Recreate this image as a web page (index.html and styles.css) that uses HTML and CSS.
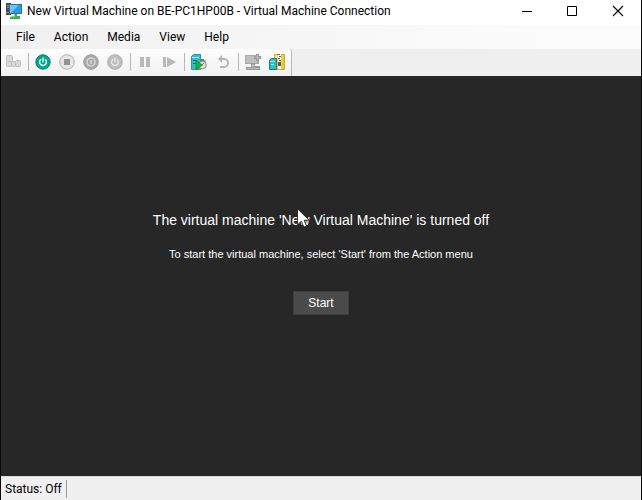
FILE: index.html
```html
<!DOCTYPE html>
<html lang="en">
<head>
<meta charset="utf-8">
<title>New Virtual Machine on BE-PC1HP00B - Virtual Machine Connection</title>
<link rel="stylesheet" href="styles.css">
</head>
<body>
<div class="window">
  <header class="titlebar">
    <svg class="app-icon" width="16" height="16" viewBox="0 0 16 16">
      <path fill="#454b50" d="M0 0h5v12H0z"/><path fill="#8d969b" d="M1 2h2v1H1zM1 4h2v1H1z"/><path fill="#47c34b" d="M0 9h3v1H0z"/>
      <path fill="#3a6a8a" d="M3 1h13v10H3z"/><path fill="#239be8" d="M4 2h11v8H4z"/><path fill="#69c3fa" d="M4 2h9l-8 8H4z"/>
      <path fill="#35b34a" d="M8 11h3v2h3v3H4v-2l4-1z"/><path fill="#7ddb7c" d="M8 11h1v3H6v-1h2z"/>
    </svg>
    <h1 class="title">New Virtual Machine on BE-PC1HP00B - Virtual Machine Connection</h1>
    <div class="window-buttons">
      <button class="window-button" aria-label="Minimize"><svg width="12" height="12" viewBox="0 0 12 12"><path fill="#000" d="M2 6h10v1H2z"/></svg></button>
      <button class="window-button" aria-label="Maximize"><svg width="12" height="12" viewBox="0 0 12 12"><path fill="none" stroke="#000" d="M1.500 1.500h9v9h-9z"/></svg></button>
      <button class="window-button" aria-label="Close"><svg width="12" height="12" viewBox="0 0 12 12"><path fill="none" stroke="#000" stroke-width="1.100" d="M1 1l10 10M11 1L1 11"/></svg></button>
    </div>
  </header>
  <nav class="menubar">
    <button class="menu">File</button>
    <button class="menu">Action</button>
    <button class="menu">Media</button>
    <button class="menu">View</button>
    <button class="menu">Help</button>
  </nav>
  <div class="toolstrip">
    <div class="toolbar" role="toolbar">
      <button class="tool" aria-label="Ctrl+Alt+Delete" disabled><svg width="16" height="16" viewBox="0 0 16 16"><g fill="#d9d9d9" stroke="#bdbdbd"><rect x="1.500" y="1.500" width="6" height="6" rx="1"/><rect x="1.500" y="7.500" width="5" height="5" rx="1"/><rect x="6.500" y="7.500" width="4" height="5" rx="1"/><rect x="10.500" y="6.500" width="5" height="6" rx="1"/></g></svg></button>
      <span class="separator"></span>
      <button class="tool" aria-label="Start"><svg width="16" height="16" viewBox="0 0 16 16"><circle cx="8" cy="8" r="7.200" fill="#04a78d" stroke="#087b69"/><path fill="none" stroke="#fff" stroke-width="1.300" stroke-linecap="round" d="M8 4v4M5.700 5.600a3.400 3.400 0 1 0 4.600 0"/></svg></button>
      <button class="tool" aria-label="Turn off" disabled><svg width="16" height="16" viewBox="0 0 16 16"><circle cx="8" cy="8" r="7.300" fill="#e5e5e5" stroke="#b3b3b3"/><path fill="#929292" d="M5 5h6v6H5z"/></svg></button>
      <button class="tool" aria-label="Shut down" disabled><svg width="16" height="16" viewBox="0 0 16 16"><circle cx="8" cy="8" r="7.300" fill="#a9a9a9" stroke="#9c9c9c"/><circle cx="8" cy="8" r="4" fill="none" stroke="#e2e2e2" stroke-width="1.200"/><path stroke="#e2e2e2" stroke-width="1.200" d="M8 6v4"/></svg></button>
      <button class="tool" aria-label="Save" disabled><svg width="16" height="16" viewBox="0 0 16 16"><circle cx="8" cy="8" r="7.300" fill="#bdbdbd" stroke="#aeaeae"/><path fill="none" stroke="#e8e8e8" stroke-width="1.300" stroke-linecap="round" d="M8 4v4M5.700 5.600a3.400 3.400 0 1 0 4.600 0"/></svg></button>
      <span class="separator"></span>
      <button class="tool" aria-label="Pause" disabled><svg width="16" height="16" viewBox="0 0 16 16"><path fill="#b8b8b8" d="M3 3h4v10H3zM9 3h4v10H9z"/></svg></button>
      <button class="tool" aria-label="Reset" disabled><svg width="16" height="16" viewBox="0 0 16 16"><path fill="#b8b8b8" d="M2 3h3v10H2zM6 3l9 5-9 5z"/></svg></button>
      <span class="separator"></span>
      <button class="tool" aria-label="Checkpoint"><svg width="16" height="16" viewBox="0 0 16 16"><path fill="#35bcc8" stroke="#2a98a2" d="M.5 2.500l2-2h7v15h-9z"/><path fill="#a2eef0" d="M1 3h7v1H1z"/><path fill="#16727b" d="M2 6h4v1H2zM2 9h3v1H2z"/><circle cx="11.500" cy="11" r="3.800" fill="#e2e2da" stroke="#888"/><path fill="#777" d="M10 5h3v2h-3zM14 6l1 1-1 1-1-1z"/><path stroke="#d14b3b" d="M11 11l2-2"/><path fill="#10b831" stroke="#087722" stroke-width=".6" d="M5 6.500l6.500 4.500L5 15.500z"/></svg></button>
      <button class="tool" aria-label="Revert" disabled><svg width="16" height="16" viewBox="0 0 16 16"><path fill="none" stroke="#b5b5b5" stroke-width="2" d="M4 5h5a4 4 0 0 1 0 8H5"/><path fill="#b5b5b5" d="M7 1v8L3 5z"/></svg></button>
      <span class="separator"></span>
      <button class="tool" aria-label="Enhanced session" disabled><svg width="16" height="16" viewBox="0 0 16 16"><path fill="#aaa" d="M0 1h14v9H0z"/><path fill="#bfbfbf" d="M1 2h11v7H1z"/><path fill="#999" d="M11 0h3v2h2v3h-2v2h-3V5H9V2h2zM6 9h4v3h5v4H1v-3h5z"/><path fill="#bdbdbd" d="M12 1h1v5h-1zM10 3h5v1h-5zM7 10h2v3H7zM2 14h12v1H2z"/></svg></button>
      <button class="tool" aria-label="Share"><svg width="16" height="16" viewBox="0 0 16 16"><path fill="#edc944" stroke="#d0a83a" d="M5.500.500h10v15h-10z"/><path fill="#ffe894" d="M6 1h2v13H6z"/><path fill="#fff" d="M9 0h3v15H9z"/><path fill="#5e5a48" d="M9 0h2v1H9zM10 2h2v1h-2zM9 4h2v1H9zM10 6h2v1h-2zM9 8h3v4H9z"/><path fill="#37bdc7" stroke="#187882" d="M.5 6.500l2-2h5v11h-7z"/><path fill="#92e5e7" d="M1 7h5v1H1zM2 10h3v1H2z"/></svg></button>
    </div>
  </div>
  <main class="screen">
    <h2 class="heading">The virtual machine 'New Virtual Machine' is turned off<svg class="cursor" width="13" height="21" viewBox="0 0 13 21"><path fill="#fff" stroke="#111" stroke-width=".8" d="M.5.800v16l3.800-3.600 2.600 6 2.700-1.200-2.500-5.800h5z"/></svg></h2>
    <p class="hint">To start the virtual machine, select 'Start' from the Action menu</p>
    <button class="start">Start</button>
  </main>
  <footer class="statusbar"><span class="status">Status: Off</span></footer>
</div>
</body>
</html>
```
FILE: styles.css
```css
* { box-sizing: border-box; }
body { margin: 0; font: 12px/16px Roboto, "Open Sans", sans-serif; color: #000; }
button { margin: 0; padding: 0; border: 0; background: transparent; color: inherit; font: inherit; }
svg { display: block; }
.window { display: flex; flex-direction: column; min-height: 100vh; border: solid #090909; border-width: 0 1px; background: #f0f0f0; }
.titlebar { display: flex; align-items: center; height: 25px; padding-left: 5px; background: #fff; }
.app-icon { flex: none; margin-top: -3px; }
.title { flex: 1; margin: 0 0 3px 5px; font: inherit; white-space: nowrap; }
.window-buttons { display: flex; align-self: flex-start; }
.window-button { display: grid; place-items: center; width: 46px; height: 22px; }
.menubar { display: flex; align-items: center; gap: 1px; height: 24px; padding-left: 6px; background: linear-gradient(90deg, #f0f0f0, #fcfcfc 85%); }
.menu { padding: 0 9px; height: 20px; }
.toolstrip { display: flex; height: 27px; background: #efefef; }
.toolbar { display: flex; align-items: center; padding: 0 2px 2px 0; border-right: 1px solid #b8b8b8; border-radius: 0 3px 0 0; background: linear-gradient(#fdfdfd, #f1f1f1); }
.tool { display: grid; place-items: center; width: 24px; height: 24px; }
.separator { width: 1px; height: 18px; margin: 0 2px 0 3px; background: #b8b8b8; }
.screen { flex: 1; display: flex; flex-direction: column; align-items: center; justify-content: center; padding-bottom: 27px; background: #272727; color: #fff; font-family: "Liberation Sans", Arial, sans-serif; }
.heading { position: relative; margin: 0; font-size: 14px; line-height: 20px; font-weight: 400; }
.cursor { position: absolute; left: 43%; top: -2px; }
.hint { margin: 16px 0 29px; font-size: 11px; line-height: 16px; }
.start { width: 56px; height: 24px; border: 1px solid #3e3e3e; background: #4b4b4b; font-family: inherit; }
.statusbar { display: flex; align-items: center; height: 24px; border-top: 1px solid #dadada; }
.status { padding: 0 4px; border-right: 1px solid #999; line-height: 18px; }
```
